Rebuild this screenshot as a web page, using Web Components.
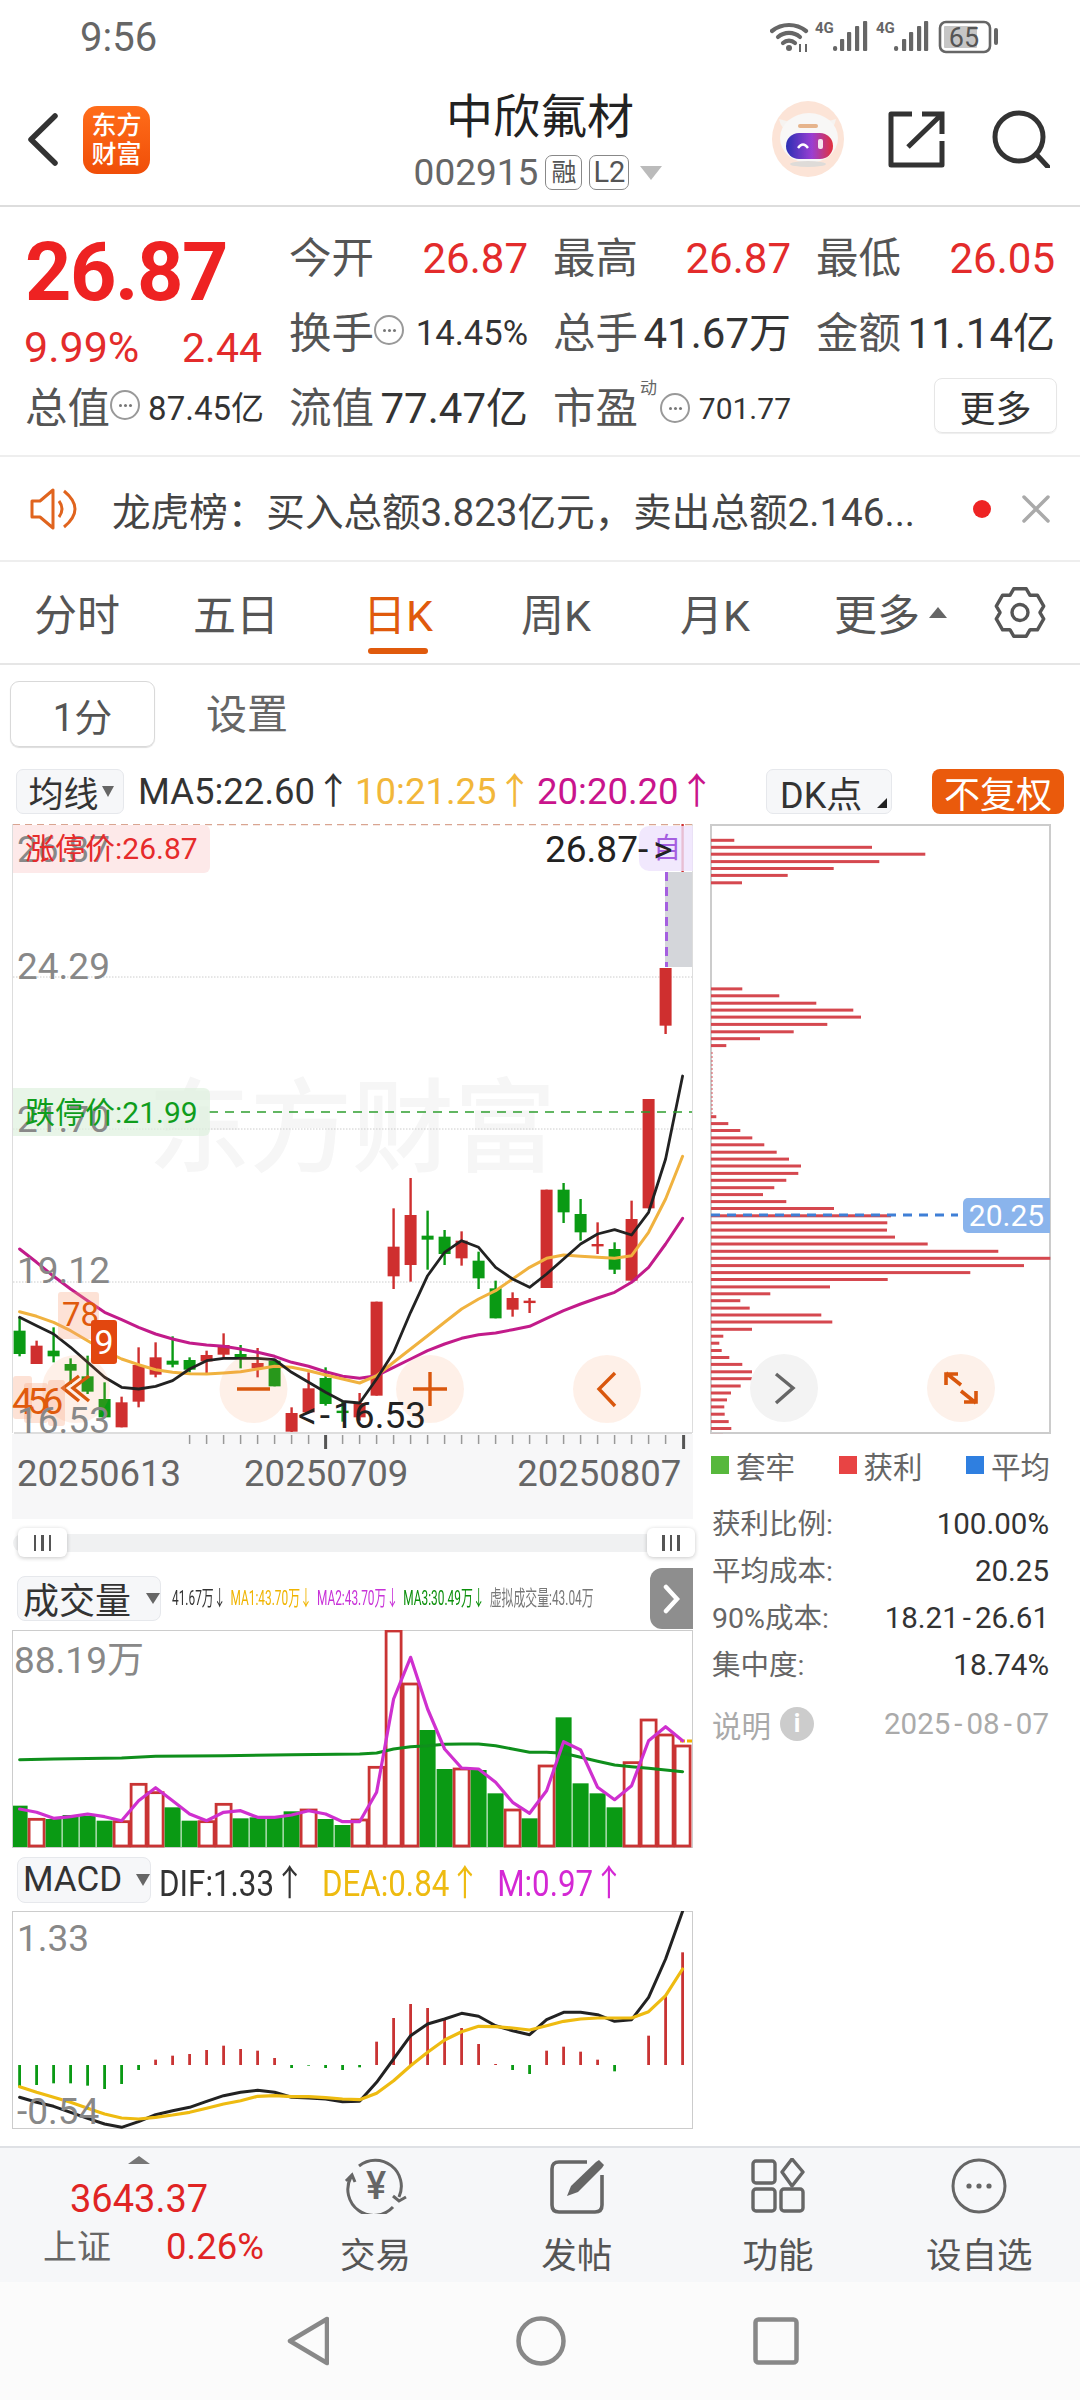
<!DOCTYPE html>
<html lang="zh">
<head>
<meta charset="utf-8">
<title>中欣氟材</title>
<style>
  html, body { margin: 0; padding: 0; background: #fff; }
  body { width: 1080px; height: 2400px; overflow: hidden; font-family: Roboto, "Noto Sans CJK SC", sans-serif; color: #333; }
  .columns { display: flex; align-items: flex-start; padding-left: 12px; }
  .left { width: 681px; display: block; }
  .right { margin-left: 17px; width: 341px; display: block; }
</style>
</head>
<body>
<status-bar></status-bar>
<stock-header></stock-header>
<quote-panel>
  <big-price slot="price"></big-price>
  <quote-stat up><span slot="label">今开</span>26.87</quote-stat>
  <quote-stat up><span slot="label">最高</span>26.87</quote-stat>
  <quote-stat up><span slot="label">最低</span>26.05</quote-stat>
  <quote-stat small><span slot="label">换手</span><info-dot slot="icon"></info-dot>14.45%</quote-stat>
  <quote-stat><span slot="label">总手</span>41.67万</quote-stat>
  <quote-stat><span slot="label">金额</span>11.14亿</quote-stat>
  <quote-stat mid><span slot="label">总值</span><info-dot slot="icon"></info-dot>87.45亿</quote-stat>
  <quote-stat><span slot="label">流值</span>77.47亿</quote-stat>
  <quote-stat tiny dyn><span slot="label">市盈</span><info-dot slot="icon"></info-dot>701.77</quote-stat>
  <more-button>更多</more-button>
</quote-panel>
<notice-bar>龙虎榜：买入总额3.823亿元，卖出总额2.146...</notice-bar>
<period-tabs></period-tabs>
<period-sub></period-sub>
<ma-bar></ma-bar>
<div class="columns">
  <div class="left">
    <kline-chart></kline-chart>
    <date-axis></date-axis>
    <range-slider></range-slider>
    <vol-bar></vol-bar>
    <vol-chart></vol-chart>
    <macd-bar></macd-bar>
    <macd-chart></macd-chart>
  </div>
  <div class="right">
    <chip-chart></chip-chart>
    <chip-info></chip-info>
  </div>
</div>
<bottom-bar></bottom-bar>
<nav-bar></nav-bar>

<script>
// candle x in zoom units, helpers shared by the three charts
const RED = "#cf2f2f", GREEN = "#0a9a14";
const cx = i => 7.6 + 17 * i;
const poly = (pts, color, w) =>
  `<polyline points="${pts.map(p => p[0].toFixed(1) + "," + p[1].toFixed(1)).join(" ")}" fill="none" stroke="${color}" stroke-width="${w}" stroke-linejoin="round" stroke-linecap="round"/>`;

class Base extends HTMLElement {
  constructor() {
    super();
    this.attachShadow({ mode: "open" });
    this.shadowRoot.innerHTML = `<style>${this.constructor.css}</style>${this.constructor.html}`;
  }
}
const tag = (name, css, html) => {
  customElements.define(name, class extends Base {
    static get css() { return css; }
    static get html() { return typeof html === "function" ? html() : html; }
  });
};

tag("status-bar", `
  :host { display: flex; height: 76px; align-items: center; justify-content: space-between; padding: 0 80px 0 80px; color: #666; box-sizing: border-box; }
  .t { font-size: 40px; margin-top: -1px; }
  svg { display: block; }
`, `
  <span class="t">9:56</span>
  <svg width="230" height="36" viewBox="0 0 230 36" fill="none" stroke="#666">
    <path d="M2 11 A27 27 0 0 1 36 11" stroke-width="4.2" stroke-linecap="round"/>
    <path d="M8 17 A17 17 0 0 1 30 17" stroke-width="4.2" stroke-linecap="round"/>
    <path d="M13 23 A9 9 0 0 1 25 23" stroke-width="4.2" stroke-linecap="round"/>
    <circle cx="19" cy="28" r="3" fill="#666" stroke="none"/>
    <path d="M30 24v8M36 24v8" stroke-width="2"/>
    <text x="45" y="13" font-size="15" font-weight="700" fill="#666" stroke="none">4G</text>
    <g fill="#666" stroke="none">
      <rect x="63" y="26" width="4.2" height="5" rx="2"/><rect x="70" y="19" width="4.2" height="12" rx="1"/><rect x="77" y="12" width="4.2" height="19" rx="1"/><rect x="85" y="6" width="4.2" height="25" rx="1"/><rect x="93" y="1" width="4.2" height="30" rx="1"/>
    </g>
    <text x="106" y="13" font-size="15" font-weight="700" fill="#666" stroke="none">4G</text>
    <g fill="#666" stroke="none">
      <rect x="124" y="26" width="4.2" height="5" rx="2"/><rect x="132" y="19" width="4.2" height="12" rx="1"/><rect x="139" y="12" width="4.2" height="19" rx="1"/><rect x="147" y="6" width="4.2" height="25" rx="1"/><rect x="154" y="1" width="4.2" height="30" rx="1"/>
    </g>
    <rect x="170" y="2" width="50" height="30" rx="6" stroke-width="2.6"/>
    <rect x="174" y="6" width="33" height="22" rx="1" fill="#c6c6c6" stroke="none"/>
    <rect x="224" y="8" width="4" height="17" rx="2" fill="#666" stroke="none"/>
    <text x="194" y="27" text-anchor="middle" font-size="27" fill="#555" stroke="none">65</text>
  </svg>
`);

tag("stock-header", `
  :host { display: grid; grid-template-columns: 1fr auto 1fr; height: 131px; box-sizing: border-box; border-bottom: 2px solid #ddd; align-items: center; }
  .l { display: flex; align-items: center; padding-left: 27px; gap: 25px; margin-top: -2px; }
  .logo { width: 67px; height: 68px; border-radius: 14px; background: linear-gradient(#ff6d1a, #f04e08); color: #fff; font-size: 25px; line-height: 29px; text-align: center; display: flex; flex-direction: column; justify-content: center; font-weight: 500; }
  .c { display: flex; flex-direction: column; align-items: center; margin-top: 0; }
  .title { font-size: 47px; line-height: 60px; color: #222; }
  .sub { display: flex; align-items: center; gap: 7px; font-size: 37px; line-height: 44px; color: #666; margin-top: 4px; margin-left: -4px; }
  .badge { border: 1.5px solid #888; border-radius: 7px; font-size: 25px; height: 33px; line-height: 33px; width: 35px; text-align: center; color: #555; }
  .badge.b2 { font-size: 29px; width: 38px; }
  .tri { width: 0; height: 0; border-left: 11px solid transparent; border-right: 11px solid transparent; border-top: 14px solid #bbb; margin-left: 4px; }
  .r { display: flex; justify-content: flex-end; align-items: center; padding-right: 30px; margin-top: -3px; }
  svg { display: block; }
`, `
  <div class="l">
    <svg width="31" height="53" viewBox="0 0 31 53" fill="none"><path d="M28 3 L4 26.5 L28 50" stroke="#333" stroke-width="5.5" stroke-linecap="round" stroke-linejoin="round"/></svg>
    <div class="logo"><span>东方</span><span>财富</span></div>
  </div>
  <div class="c">
    <div class="title">中欣氟材</div>
    <div class="sub"><span>002915</span><span class="badge">融</span><span class="badge b2">L2</span><span class="tri"></span></div>
  </div>
  <div class="r">
    <svg width="76" height="76" viewBox="0 0 76 76" style="margin-right:42px">
      <defs>
        <linearGradient id="v" x1="0" x2="1"><stop offset="0" stop-color="#2b2fb4"/><stop offset=".55" stop-color="#9a3fd2"/><stop offset="1" stop-color="#e2303c"/></linearGradient>
        <filter id="soft"><feGaussianBlur stdDeviation=".7"/></filter>
      </defs>
      <ellipse cx="38" cy="38" rx="36" ry="38" fill="#fce4d7"/>
      <g filter="url(#soft)">
        <path d="M9 18 Q11 29 21 31 L24 22 Z M66 18 Q64 29 56 31 L52 22 Z" fill="#f6f3f0"/>
        <ellipse cx="39" cy="37" rx="29" ry="25" fill="#f8f7f6"/>
        <rect x="28" y="23" width="20" height="4" rx="2" fill="#e6b48c"/>
        <rect x="16" y="32" width="47" height="26" rx="13" fill="url(#v)"/>
        <path d="M28 47 q5 -7 10 0" stroke="#fff" stroke-width="2.4" fill="none"/>
        <rect x="48" y="38" width="5" height="10" rx="2" fill="#f5e6ef"/>
        <ellipse cx="38" cy="63" rx="18" ry="3" fill="#dedbd8"/>
      </g>
    </svg>
    <svg width="57" height="57" viewBox="0 0 57 57" fill="none" stroke="#333" stroke-width="5" style="margin-right:47px">
      <path d="M24 3 H3 V54 H54 V30" stroke-linejoin="round"/>
      <path d="M20 36 L53 4 M34 3 H54 V23"/>
    </svg>
    <svg width="58" height="58" viewBox="0 0 58 58" fill="none" stroke="#333" stroke-width="5"><circle cx="27" cy="27" r="24"/><path d="M44 44 L56 57" stroke-linecap="round"/></svg>
  </div>
`);

tag("info-dot", `
  :host { display: inline-block; width: 30px; height: 30px; box-sizing: border-box; border: 2px solid #999; border-radius: 50%; position: relative; top: -4px; }
  i { position: absolute; left: 7px; top: 12px; width: 3px; height: 3px; border-radius: 50%; background: #777; box-shadow: 5px 0 #777, 10px 0 #777; }
`, `<i></i>`);

tag("big-price", `
  :host { display: block; font-family: Roboto, sans-serif; }
  .p { font-size: 81px; line-height: 100px; font-weight: 700; color: #ee2222; letter-spacing: -1.5px; margin-top: 2px; margin-left: -1px; }
  .s { display: flex; justify-content: space-between; align-items: baseline; line-height: 48px; color: #e32b2b; width: 238px; margin-left: -2px; font-size: 41px; }
  .s span:first-child { font-size: 43px; }
`, `<div class="p">26.87</div><div class="s"><span>9.99%</span><span>2.44</span></div>`);

tag("quote-stat", `
  :host { display: flex; align-items: center; font-size: 42px; color: #333; white-space: nowrap; line-height: 75px; }
  .l { color: #555; font-size: 42.5px; margin-left: -1px; }
  .i { display: inline-flex; }
  .v { margin-left: auto; }
  :host([up]) .v { color: #e32b2b; }
  :host([small]) .v { font-size: 34.6px; }
  :host([mid]) .v { font-size: 33px; }
  :host([tiny]) .v { font-size: 30px; }
  sup { display: none; }
  :host([dyn]) sup { display: inline; font-size: 17px; line-height: 17px; color: #666; position: relative; top: -20px; margin-left: 2px; vertical-align: baseline; }
  :host([dyn]) .i { margin-left: 3px; position: relative; top: 3px; }
`, `<span class="l"><slot name="label"></slot></span><sup>动</sup><span class="i"><slot name="icon"></slot></span><span class="v"><slot></slot></span>`);

tag("more-button", `
  :host { display: flex; width: 123px; height: 55px; box-sizing: border-box; border: 1.5px solid #e6e6e6; border-radius: 8px; font-size: 36px; color: #333; align-items: center; justify-content: center; justify-self: end; align-self: center; margin: -6px -2px 0 0; box-shadow: 0 1px 1px #eee; }
`, `<slot></slot>`);

tag("quote-panel", `
  :host { display: grid; grid-template-columns: 238px 238px 237px 238px; grid-template-rows: 75px 75px 75px; grid-auto-flow: row dense; column-gap: 26px; height: 250px; box-sizing: border-box; padding: 14px 0 0 26px; border-bottom: 2px solid #eee; }
  .price { grid-row: 1 / span 2; }
`, `
  <div class="price"><slot name="price"></slot></div>
  <slot></slot>
`);

tag("notice-bar", `
  :host { display: flex; height: 105px; box-sizing: border-box; align-items: center; padding-left: 30px; border-bottom: 2px solid #eee; font-size: 38.6px; color: #444; white-space: nowrap; }
  .txt { margin-left: 33px; width: 852px; }
  .dot { width: 18px; height: 18px; background: #ee2424; border-radius: 50%; margin-left: 9px; }
  svg { display: block; }
`, `
  <svg width="49" height="42" viewBox="0 0 49 42" fill="none" stroke="#e0641e" stroke-width="3"><path d="M2 13 H10 L23 2 V40 L10 29 H2 Z" stroke-linejoin="round"/><path d="M29 13 Q35 21 29 29"/><path d="M34 3 Q56 21 34 39"/></svg>
  <span class="txt"><slot></slot></span>
  <span class="dot"></span>
  <svg width="28" height="28" viewBox="0 0 28 28" style="margin-left:31px" stroke="#aaa" stroke-width="3.5" stroke-linecap="round"><path d="M2 2 L26 26 M26 2 L2 26"/></svg>
`);

tag("period-tabs", `
  :host { display: block; position: relative; height: 104px; box-sizing: border-box; border-bottom: 2px solid #e6e6e6; font-size: 43px; color: #555; }
  .row { display: flex; height: 102px; align-items: center; padding: 0 0 0 34px; margin-top: -1px; white-space: nowrap; }
  span.t { display: inline-block; }
  .on { color: #e05a0c; position: relative; }
  .on::after { content: ""; position: absolute; left: 5px; width: 60px; bottom: -11px; height: 6px; border-radius: 3px; background: #e05a0c; }
  .tri { width: 0; height: 0; border-left: 9px solid transparent; border-right: 9px solid transparent; border-bottom: 11px solid #666; margin-left: 9px; }
  svg { display: block; margin-left: 47px; }
`, () => {
  let d = "";
  for (let k = 0; k < 6; k++) {
    const a = k * Math.PI / 3 - Math.PI / 2, w = 0.26;
    const P = (r, t) => (26 + r * Math.cos(t)).toFixed(1) + " " + (25.5 + r * Math.sin(t)).toFixed(1);
    d += (k ? "L" : "M") + P(20, a - 0.52) + "L" + P(24.5, a - w) + "L" + P(24.5, a + w) + "L" + P(20, a + 0.52);
  }
  return `<div class="row">
    <span class="t">分时</span><span class="t" style="margin-left:73px">五日</span><span class="t on" style="margin-left:84px">日K</span><span class="t" style="margin-left:88px">周K</span><span class="t" style="margin-left:89px">月K</span><span class="t" style="margin-left:84px">更多</span><span class="tri"></span>
    <svg width="52" height="51" viewBox="0 0 52 51" fill="none" stroke="#555" stroke-width="3.4" stroke-linejoin="round"><path d="${d}Z"/><circle cx="26" cy="25.5" r="8"/></svg>
  </div>`;
});

tag("period-sub", `
  :host { display: flex; height: 104px; box-sizing: border-box; padding: 16px 0 0 10px; }
  .b { width: 145px; height: 66px; box-sizing: border-box; border: 1.5px solid #d9d9d9; border-radius: 9px; font-size: 38px; color: #555; display: flex; align-items: center; justify-content: center; box-shadow: 0 1px 1px #ddd; }
  .s { margin-left: 51px; font-size: 41px; line-height: 66px; color: #666; margin-top: 1px; }
`, `<div class="b">1分</div><div class="s">设置</div>`);

tag("ma-bar", `
  :host { display: flex; height: 55px; align-items: flex-start; box-sizing: border-box; padding-left: 16px; white-space: nowrap; font-size: 36.5px; color: #333; }
  .btn { height: 45px; box-sizing: border-box; border: 1.5px solid #e6e8ec; border-radius: 7px; background: #f6f7f9; display: flex; align-items: center; justify-content: center; }
  .a { width: 108px; font-size: 35px; padding-left: 2px; }
  .tri { width: 0; height: 0; border-left: 6px solid transparent; border-right: 6px solid transparent; border-top: 11px solid #666; margin-left: 3px; }
  .line { display: flex; line-height: 45px; margin-left: 14px; width: 628px; }
  .y { color: #f2b73a; margin-left: 3.5px; } .p { color: #c9148c; margin-left: 4px; }
  .d { width: 126px; font-size: 36px; position: relative; justify-content: flex-start; padding-left: 13px; }
  .d i { position: absolute; right: 4px; bottom: 5px; width: 0; height: 0; border-left: 10px solid transparent; border-bottom: 10px solid #222; }
  .f { margin-left: 40px; width: 132px; height: 45px; background: #ea5a0c; color: #fff; border-radius: 8px; display: flex; align-items: center; justify-content: center; font-size: 36px; }
`, `
  <div class="btn a">均线<span class="tri"></span></div>
  <div class="line"><span>MA5:22.60↑</span><span class="y">10:21.25↑</span><span class="p">20:20.20↑</span></div>
  <div class="btn d">DK点<i></i></div>
  <div class="f">不复权</div>
`);

// price chart
const CANDLES = [
 "g355 395 465 472","r425 440 495 495","g385 455 472 490","g478 495 515 555","g470 532 578 585","g550 600 655 655","r593 610 685 685","r445 498 608 625",
 "r430 475 527 535","g412 485 497 505","g475 483 512 520","r455 468 487 525","r403 438 467 480","g438 465 480 508","r447 492 508 535","g480 485 562 562",
 "r625 642 698 708","r520 568 640 640","g505 537 615 620","g605 635 640 668","r582 612 655 665","r308 308 590 590","r28 143 232 270","r-63 48 198 248",
 "g35 110 122 212","g93 113 165 198","r97 125 178 200","g158 185 238 270","g245 268 358 358","r280 297 332 353","r297 305 312 342","r-28 -28 267 267",
 "g-48 -28 40 72","g0 45 100 125","r70 135 140 165","g130 150 212 225","r5 60 245 245","r-300 -300 28 28","r-693 -693 -520 -495"];
const MA5 = [355,380,405,445,490,535,565,570,562,545,510,485,478,478,478,482,520,550,580,607,612,540,460,340,230,160,125,145,205,240,265,225,180,135,105,92,108,40,-120,-369];
const MA10 = [338,352,370,395,425,455,480,497,512,520,524,525,522,518,510,502,505,515,528,540,552,530,490,450,410,370,330,300,275,240,205,178,168,172,175,178,170,100,0,-128];
const MA20 = [150,190,232,270,305,340,362,385,405,420,432,438,442,450,460,472,490,502,518,532,538,530,505,480,455,435,418,407,402,392,382,358,335,315,297,280,250,205,135,58];

tag("kline-chart", `
  :host { display: block; position: relative; width: 681px; height: 610px; background: #fff; }
  svg { position: absolute; left: 0; top: 0; display: block; }
  span { position: absolute; white-space: nowrap; transform: translateY(-50%); font-size: 37px; line-height: 44px; }
  b { font-weight: 400; }
  .g { color: #888; }
  .tag { position: absolute; left: 1px; width: 197px; height: 48px; border-radius: 0 6px 6px 0; }
  .box { position: absolute; background: rgba(250,160,120,.3); border-radius: 3px; }
  .mk { position: absolute; text-align: center; font-size: 37px; }
  .wm { position: absolute; left: 136px; top: 250px; font-size: 102px; line-height: 110px; color: #f6f6f6; white-space: nowrap; font-weight: 500; }
`, () => {
  const Y = z => 375 + z / 3;
  let s = `<line x1="1" y1="0.5" x2="680" y2="0.5" stroke="#d9a591" stroke-width="1.5" stroke-dasharray="7 5"/>`;
  for (const y of [153, 305, 458]) s += `<line x1="1" y1="${y}" x2="680" y2="${y}" stroke="#ccc" stroke-width="1" stroke-dasharray="1.5 1.5"/>`;
  s += `<rect x="653" y="48" width="27" height="95" fill="#d4d6da"/>`;
  s += `<line x1="654.5" y1="48" x2="654.5" y2="143" stroke="#a55fe0" stroke-width="3" stroke-dasharray="9 6"/>`;
  CANDLES.forEach((c, i) => {
    const col = c[0] === "r" ? RED : GREEN, v = c.slice(1).split(" ").map(Number), x = cx(i);
    s += `<line x1="${x}" x2="${x}" y1="${Y(v[0])}" y2="${Y(v[3])}" stroke="${col}" stroke-width="2.4"/>`;
    s += `<rect x="${x - 6}" y="${Y(v[1])}" width="12" height="${Math.max(Y(v[2]) - Y(v[1]), 2.4)}" fill="${col}"/>`;
  });
  s += `<line x1="670.6" x2="670.6" y1="0" y2="48" stroke="${RED}" stroke-width="2.4"/>`;
  s += poly(MA20.map((z, i) => [cx(i), Y(z)]), "#c21b8a", 3);
  s += poly(MA10.map((z, i) => [cx(i), Y(z)]), "#f0b23f", 3);
  s += poly(MA5.map((z, i) => [cx(i), Y(z)]), "#222", 2.8);
  s += `<line x1="197" x2="680" y1="288" y2="288" stroke="#2f9e2f" stroke-width="1.5" stroke-dasharray="9 7"/>`;
  const bubble = (x, inner) => `<circle cx="${x}" cy="565" r="34" fill="#f8894f" fill-opacity=".13"/><g fill="none" stroke="#d9570d" stroke-width="3.4">${inner}</g>`;
  s += bubble(64, `<path d="M80 553 L64 565 L80 578 M70 553 L54 565 L70 578" transform="translate(-3 -1)"/>`);
  s += bubble(241.5, `<path d="M225 565 H258"/>`);
  s += bubble(418, `<path d="M401 565 H435 M418 548 V582"/>`);
  s += bubble(595, `<path d="M603 549 L587 565 L603 582"/>`);
  s += `<path d="M2 609 H680" stroke="#ddd" stroke-width="2"/><path d="M0.5 0 V609 M680.5 0 V609" stroke="#ddd" stroke-width="1"/>`;
  const t = (x, y, cls, text, extra = "") => `<span class="${cls}" style="left:${x}px;top:${y}px;${extra}">${text}</span>`;
  return `
    <div class="wm">东方财富</div>
    <svg width="681" height="610" viewBox="0 0 681 610">${s}</svg>
    <div class="tag" style="top:1px;background:#fde9e9"></div>
    <div class="tag" style="top:264px;background:rgba(222,241,222,.7)"></div>
    <div style="position:absolute;left:627px;top:2px;width:54px;height:45px;border-radius:10px 0 0 10px;background:rgba(238,226,253,.8)"></div>
    ${t(5, 26, "g", "26.87")}
    ${t(5, 143, "g", "24.29")}
    ${t(5, 296, "g", "21.70")}
    ${t(5, 447, "g", "19.12")}
    ${t(13, 25, "", "涨停价:26.87", "color:#e62b2b;font-size:30px")}
    ${t(13, 289, "", "跌停价:21.99", "color:#0f9d1c;font-size:30px")}
    ${t(641, 25, "", "自", "color:#a55fe0;font-size:28px")}
    ${t(533, 26, "", "26.87<b style='letter-spacing:5px'>-</b><b>&gt;</b>", "color:#222")}
    <div class="box" style="left:46px;top:468px;width:41px;height:47px"></div>
    ${t(50, 491, "", "78", "color:#e05a0c;font-size:33px")}
    <div class="mk" style="left:79px;top:496px;width:26px;height:44px;background:#e2470f;border-radius:3px;color:#fff;line-height:44px;font-size:34px">9</div>
    <div class="box" style="left:1px;top:552px;width:19px;height:43px"></div>
    <div class="box" style="left:12px;top:559px;width:24px;height:40px"></div>
    <div class="box" style="left:36px;top:556px;width:17px;height:46px"></div>
    ${t(0, 578, "", "456", "color:#e05a0c;letter-spacing:-5.5px")}
    ${t(5, 597, "g", "16.53")}
    ${t(286, 592, "", "<b style='letter-spacing:3px'>&lt;-</b>16.53", "color:#222")}
  `;
});

tag("date-axis", `
  :host { display: block; height: 85px; background: #f7f7f8; width: 681px; position: relative; font-size: 36.5px; color: #666; }
  svg { display: block; }
  .d { display: flex; white-space: nowrap; padding: 3px 0 0 5px; line-height: 44px; }
`, () => {
  let t = "";
  for (let i = 10; i < 40; i++) {
    const big = i === 18 || i === 39;
    t += `<line x1="${cx(i) + (i === 39 ? 1 : 0)}" x2="${cx(i) + (i === 39 ? 1 : 0)}" y1="1" y2="${big ? 15 : 10}" stroke="${big ? "#555" : "#999"}" stroke-width="${big ? 3 : 1.5}"/>`;
  }
  return `<svg width="681" height="15">${t}</svg><div class="d"><span>20250613</span><span style="margin-left:63px">20250709</span><span style="margin-left:109px">20250807</span></div>`;
});

tag("range-slider", `
  :host { display: block; position: relative; height: 47px; }
  .track { position: absolute; left: 1px; right: 0; top: 15px; height: 18px; border-radius: 9px; background: #f0f1f2; }
  .h { position: absolute; top: 9px; width: 49px; height: 29px; border-radius: 6px; background: #fff; box-shadow: 0 1px 4px rgba(0,0,0,.22); display: flex; align-items: center; justify-content: center; gap: 5px; }
  .h i { width: 2.5px; height: 16px; background: #555; }
`, `<div class="track"></div><div class="h" style="left:6px"><i></i><i></i><i></i></div><div class="h" style="left:635px;width:48px"><i></i><i></i><i></i></div>`);

tag("vol-bar", `
  :host { display: flex; align-items: center; height: 64px; width: 681px; white-space: nowrap; position: relative; }
  .btn { margin-left: 5px; width: 152px; height: 45px; box-sizing: border-box; border: 1.5px solid #e6e8ec; border-radius: 8px; background: #f6f7f9; display: flex; align-items: center; font-size: 36px; color: #333; padding-left: 5px; }
  .tri { width: 0; height: 0; border-left: 7px solid transparent; border-right: 7px solid transparent; border-top: 11px solid #666; margin-left: 15px; }
  .t { margin-left: 11px; font-size: 21px; line-height: 30px; transform: scaleX(.565); transform-origin: left center; display: flex; gap: 9px; color: #333; }
  .go { position: absolute; right: 0; top: 2px; width: 43px; height: 61px; background: #8e8e8e; border-radius: 12px 0 0 12px; display: flex; align-items: center; justify-content: center; }
`, `
  <div class="btn">成交量<span class="tri"></span></div>
  <div class="t"><span>41.67万↓</span><span style="color:#f0b400">MA1:43.70万↓</span><span style="color:#c832d8">MA2:43.70万↓</span><span style="color:#0a8f0a">MA3:30.49万↓</span><span style="color:#777">虚拟成交量:43.04万</span></div>
  <div class="go"><svg width="17" height="30" viewBox="0 0 17 30" fill="none" stroke="#fff" stroke-width="4.5" stroke-linecap="round"><path d="M3 3 L14 15 L3 27"/></svg></div>
`);

const VOL = ["g770","r808","g810","g798","g800","g815","r815","r703","r728","g775","g815","r815","r763","g808","g805","g805","g787","r780","g810","g828","r810","r652","r243","r402","g543","g660","r657","g663","g733","r780","g808","r648","g505","g703","g733","g775","r638","r510","r555","r588"];
const VOL_M = [780,790,808,803,795,803,815,755,716,755,795,815,790,785,805,805,798,785,795,818,818,730,450,325,480,600,657,660,700,760,793,725,578,603,715,752,710,575,533,575];
const VOL_G = [[0,632],[2,630],[6,627],[8,622],[12,620],[16,617],[20,615],[21,612],[22,600],[23,593],[24,590],[25,586],[26,585],[27,585],[28,590],[29,600],[30,610],[31,610],[32,613],[33,625],[34,637],[35,648],[36,653],[37,658],[38,663],[39,668]];

tag("vol-chart", `
  :host { display: block; position: relative; height: 218px; width: 681px; }
  svg { display: block; }
  span { position: absolute; left: 2px; top: 9px; font-size: 37px; line-height: 44px; color: #888; }
`, () => {
  const Y = z => -81 + z / 3;
  const bottom = 217;
  let s = "";
  VOL.forEach((v, i) => {
    const top = Y(+v.slice(1)), x = cx(i);
    const left = Math.max(x - 8, 1), right = x + 8;
    if (v[0] === "g") s += `<rect x="${left}" y="${top}" width="${right - left}" height="${bottom - top}" fill="#0a9a14"/>`;
    else s += `<rect x="${x - 7.5}" y="${top + 1}" width="15" height="${bottom - top - 2}" fill="#fff" stroke="#c93434" stroke-width="2.8"/>`;
  });
  s += `<path d="M668 111 H680" stroke="#f0b400" stroke-width="3" stroke-dasharray="5 2"/>`;
  s += poly(VOL_G.map(p => [cx(p[0]), Y(p[1])]), "#0f8f1c", 3);
  s += poly(VOL_M.map((z, i) => [cx(i), Y(z)]), "#cf30cf", 3.2);
  return `<svg width="681" height="218" viewBox="0 0 681 218"><rect x=".5" y=".5" width="680" height="217" fill="none" stroke="#ccc"/>${s}</svg><span>88.19万</span>`;
});

tag("macd-bar", `
  :host { display: flex; align-items: center; height: 63px; white-space: nowrap; font-size: 36px; color: #333; }
  .btn { margin-left: 5px; width: 145px; height: 46px; box-sizing: border-box; border: 1.5px solid #e6e8ec; border-radius: 8px; background: #f6f7f9; display: flex; align-items: center; padding-left: 5px; font-size: 35px; }
  .tri { width: 0; height: 0; border-left: 7.5px solid transparent; border-right: 7.5px solid transparent; border-top: 12px solid #666; margin-left: 14px; }
  .t { display: flex; gap: 19px; margin-left: 8px; transform: scaleX(.87); transform-origin: left center; }
  .y { color: #eebb11; } .m { color: #d428d4; }
`, `<div class="btn">MACD<span class="tri"></span></div><div class="t"><span>DIF:1.33↑</span><span class="y">DEA:0.84↑</span><span class="m">M:0.97↑</span></div>`);

const HIST = ["g712","g708","g703","g703","g710","g720","g705","g663","r632","r620","r615","r603","r590","r600","r605","r627","g657","g650","g657","g663","g655","r578","r507","r465","r477","r513","r537","r585","r645","g663","g675","r605","r593","r608","r632","g667","","r560","r440","r310"];
const DIF = [745,760,772,790,808,825,835,818,797,785,775,757,740,730,724,730,745,747,750,758,757,700,630,560,525,510,493,502,530,545,557,512,490,490,497,517,512,445,330,187];
const DEA = [713,730,745,760,778,795,807,810,805,798,790,778,765,755,742,740,743,743,746,750,752,733,695,650,610,573,548,532,533,537,543,530,517,510,507,507,507,488,440,360];

tag("macd-chart", `
  :host { display: block; position: relative; height: 218px; width: 681px; }
  svg { display: block; }
  span { position: absolute; left: 5px; font-size: 37px; line-height: 44px; color: #888; }
`, () => {
  const Y = z => -62 + z / 3;
  let s = "";
  HIST.forEach((v, i) => {
    if (!v) return;
    const z = +v.slice(1), x = cx(i);
    s += `<rect x="${x - 1.4}" y="${Math.min(Y(648), Y(z))}" width="2.8" height="${Math.abs(Y(z) - Y(648))}" fill="${v[0] === "r" ? "#c93434" : "#0a9a14"}"/>`;
  });
  s += poly(DIF.map((z, i) => [cx(i), Y(z)]), "#222", 3);
  s += poly(DEA.map((z, i) => [cx(i), Y(z)]), "#eebb11", 3.2);
  return `<svg width="681" height="218" viewBox="0 0 681 218"><rect x=".5" y=".5" width="680" height="217" fill="none" stroke="#ccc"/>${s}</svg><span style="top:6px">1.33</span><span style="top:179px">-0.54</span>`;
});

const CHIP = [[40,132],[57,545],[74,705],[92,567],[109,430],[126,292],[144,155],
 [404,156],[421,267],[439,378],[456,489],[473,512],[491,411],[509,310],[526,209],[543,108],
 [717,78],[734,114],[751,150],[769,186],[786,222],[804,259],[821,296],[838,332],[856,324],[873,288],[891,252],[908,218],[925,288],[942,431],[960,602],[977,591],[995,590],[1012,614],[1029,712],[1047,924],[1064,1080],[1082,1001],[1099,840],[1116,592],[1134,419],[1151,240],[1168,150],[1186,178],[1203,393],[1220,426],[1238,185],[1255,99],[1272,87],[1290,94],[1307,117],[1324,156],[1342,185],[1359,189],[1377,151],[1394,122],[1411,110],[1428,102],[1446,103],[1464,115],[1481,123],[1498,98],[1516,77]];

tag("chip-chart", `
  :host { display: block; position: relative; width: 341px; height: 610px; }
  svg { display: block; }
  span { position: absolute; left: 253px; top: 374px; width: 87px; height: 35px; background: #8ab4ec; color: #fff; font-size: 30px; line-height: 35px; text-align: center; border-radius: 5px 0 0 5px; }
`, () => {
  const Y = z => z / 2.45;
  let s = `<rect x="1" y="1" width="339" height="608" fill="#fff" stroke="#ccc" stroke-width="2"/>`;
  s += `<path d="M2 228 V290" stroke="#d9525a" stroke-width="1" stroke-dasharray="2 2"/>`;
  CHIP.forEach(p => {
    s += `<rect x="1" y="${(Y(p[0]) - 1.5).toFixed(1)}" width="${((p[1] - 62) / 3).toFixed(1)}" height="3" fill="#d5484f"/>`;
  });
  s += `<line x1="1" x2="248" y1="391" y2="391" stroke="#3f7fd6" stroke-width="2.8" stroke-dasharray="9 7"/>`;
  s += `<circle cx="74" cy="564" r="34" fill="#f3f3f3"/><path d="M66 550 L83 564 L66 579" fill="none" stroke="#666" stroke-width="3.4"/>`;
  s += `<circle cx="251" cy="564" r="34" fill="#fdf1ea"/><g fill="none" stroke="#d9570d" stroke-width="3.6"><path d="M236 549 L251 561 M236 561 V550 H248"/><path d="M266 579 L251 567 M266 567 V578 H254"/></g>`;
  return `<svg width="341" height="610" viewBox="0 0 341 610">${s}</svg><span>20.25</span>`;
});

tag("chip-info", `
  :host { display: block; font-size: 28.5px; color: #666; padding: 13px 2px 0 2px; white-space: nowrap; }
  .leg { display: flex; height: 36px; align-items: center; margin-left: -1px; font-size: 29.5px; }
  .leg i { width: 18px; height: 18px; margin-right: 7px; flex: none; }
  .leg b { font-weight: 400; color: #666; width: 102.5px; flex: none; }
  .rows { margin-top: 18px; }
  .r { display: flex; justify-content: space-between; height: 47px; line-height: 47px; }
  .r span:last-child { color: #333; font-size: 29.5px; }
  .x { display: flex; align-items: center; justify-content: space-between; height: 36px; margin-top: 17px; color: #aaa; font-size: 29.5px; }
  .x div { display: flex; align-items: center; gap: 9px; }
  .i { width: 34px; height: 34px; border-radius: 50%; background: #ccc; color: #fff; font-size: 25px; line-height: 34px; text-align: center; font-weight: 700; }
  .sep { margin: 0 4px; }
`, `
  <div class="leg"><i style="background:#57b83c"></i><b>套牢</b><i style="background:#e84444"></i><b>获利</b><i style="background:#2f7fe0"></i><b>平均</b></div>
  <div class="rows">
    <div class="r"><span>获利比例:</span><span>100.00%</span></div>
    <div class="r"><span>平均成本:</span><span>20.25</span></div>
    <div class="r"><span>90%成本:</span><span>18.21<span class="sep">-</span>26.61</span></div>
    <div class="r"><span>集中度:</span><span>18.74%</span></div>
  </div>
  <div class="x"><div><span>说明</span><span class="i">i</span></div><span>2025<span class="sep">-</span>08<span class="sep">-</span>07</span></div>
`);

tag("bottom-bar", `
  :host { display: grid; grid-template-columns: 275px repeat(4, 201.25px); height: 136px; box-sizing: border-box; border-top: 2px solid #dfe1e5; background: #f6f7f9; position: absolute; left: 0; top: 2146px; width: 1080px; color: #555; }
  .idx { display: flex; flex-direction: column; align-items: flex-start; padding-top: 8px; }
  .tri { width: 0; height: 0; margin-left: 128px; border-left: 11px solid transparent; border-right: 11px solid transparent; border-bottom: 8px solid #777; }
  .n { margin: 13px 0 0 70px; font-size: 38px; line-height: 44px; color: #e02424; }
  .row { display: flex; margin: 6px 0 0 43px; font-size: 34px; line-height: 40px; color: #666; gap: 55px; }
  .row b { font-weight: 400; color: #e02424; font-size: 36.5px; }
  .it { display: flex; flex-direction: column; align-items: center; padding-top: 10px; }
  .it svg { display: block; }
  .it span { margin-top: 22px; font-size: 35.5px; line-height: 40px; }
`, `
  <div class="idx"><span class="tri"></span><span class="n">3643.37</span><div class="row"><span>上证</span><b>0.26%</b></div></div>
  <div class="it"><svg width="66" height="56" viewBox="0 0 66 56" fill="none" stroke="#666" stroke-width="3"><path d="M16 8 A26 26 0 0 1 56 39 M50 49 A26 26 0 0 1 8 19"/><path d="M3 23 L9 17 L12 24 M50 38 L56 43 L63 39"/><text x="33" y="41" text-anchor="middle" font-size="38" font-weight="500" fill="#666" stroke="none" font-family="Roboto, sans-serif">¥</text></svg><span>交易</span></div>
  <div class="it"><svg width="56" height="56" viewBox="0 0 56 56" fill="none" stroke="#666" stroke-width="3.6"><path d="M38 4 H10 Q3 4 3 11 V47 Q3 54 10 54 H46 Q53 54 53 47 V17" stroke-linejoin="round"/><path d="M18 38 L22 28 L47 4 L50 2 L55 7 L53 10 L29 34 Z" fill="#666" stroke="none"/></svg><span>发帖</span></div>
  <div class="it"><svg width="56" height="56" viewBox="0 0 56 56" fill="none" stroke="#666" stroke-width="3.4"><rect x="3" y="3" width="22" height="22" rx="3"/><rect x="3" y="31" width="22" height="22" rx="3"/><rect x="31" y="31" width="22" height="22" rx="3"/><path d="M42 1 L53 14 L42 28 L32 14 Z" stroke-linejoin="round"/></svg><span>功能</span></div>
  <div class="it"><svg width="56" height="56" viewBox="0 0 56 56" fill="none" stroke="#666" stroke-width="3"><circle cx="28" cy="28" r="26"/><circle cx="18" cy="28" r="2.6" fill="#666" stroke="none"/><circle cx="28" cy="28" r="2.6" fill="#666" stroke="none"/><circle cx="38" cy="28" r="2.6" fill="#666" stroke="none"/></svg><span>设自选</span></div>
`);

tag("nav-bar", `
  :host { position: absolute; left: 0; top: 2282px; width: 1080px; height: 118px; background: #fbfbfb; display: flex; align-items: center; padding-left: 287px; box-sizing: border-box; gap: 187px; }
  svg { display: block; }
`, `
  <svg width="42" height="50" viewBox="0 0 42 50" fill="none" stroke="#888" stroke-width="4.5" stroke-linejoin="round"><path d="M40 3 L3 25 L40 47 Z"/></svg>
  <svg width="50" height="50" viewBox="0 0 50 50" fill="none" stroke="#888" stroke-width="4.5"><circle cx="25" cy="25" r="22.5"/></svg>
  <svg width="46" height="48" viewBox="0 0 46 48" fill="none" stroke="#888" stroke-width="4.5"><rect x="2.5" y="2.5" width="41" height="43" rx="3"/></svg>
`);
</script>
</body>
</html>
